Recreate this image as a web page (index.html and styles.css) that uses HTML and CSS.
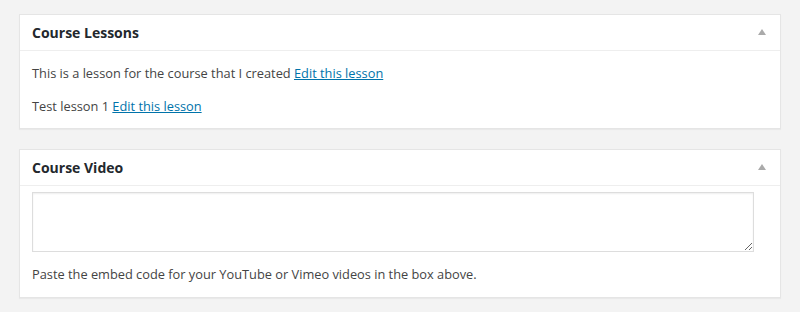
FILE: index.html
```html
<!DOCTYPE html>
<html lang="en">
<head>
    <meta charset="UTF-8">
    <title>Course Details</title>
    <link rel="stylesheet" href="styles.css">
</head>
<body>
    <div class="postbox">
        <div class="hndle">
            <h3>Course Lessons</h3>
            <span class="toggle"></span>
        </div>
        <div class="inside">
            <p>This is a lesson for the course that I created <a href="#">Edit this lesson</a></p>
            <p>Test lesson 1 <a href="#">Edit this lesson</a></p>
        </div>
    </div>

    <div class="postbox">
        <div class="hndle">
            <h3>Course Video</h3>
            <span class="toggle"></span>
        </div>
        <div class="inside inside-video">
            <textarea class="video-embed"></textarea>
            <p>Paste the embed code for your YouTube or Vimeo videos in the box above.</p>
        </div>
    </div>
</body>
</html>
```

FILE: styles.css
```css
body {
    font-family: 'Open Sans', sans-serif;
    background-color: #f3f3f3;
    color: #444;
    margin: 0;
    padding: 14px 19px 0 19px;
}
.postbox {
    width: 760px;
    background-color: #fff;
    border: 1px solid #e5e5e5;
    box-shadow: 0 1px 1px rgba(0, 0, 0, 0.04);
    margin-bottom: 20px;
}
.hndle {
    display: flex;
    align-items: center;
    justify-content: space-between;
    height: 19px;
    padding: 8px 12px;
    border-bottom: 1px solid #eee;
}
.hndle h3 {
    margin: 0;
    font-size: 14px;
    line-height: 19px;
    font-weight: 700;
    color: #23282d;
}
.toggle {
    width: 0;
    height: 0;
    border-left: 4px solid transparent;
    border-right: 4px solid transparent;
    border-bottom: 6px solid #aaa;
    margin-right: 2px;
    margin-top: -1px;
}
.inside {
    padding: 0 12px 12px;
    font-size: 12.8px;
}
.inside p {
    margin: 13px 0;
    line-height: 19.5px;
}
.inside p:last-child {
    margin-bottom: 0;
}
.inside a {
    color: #0073aa;
    text-decoration: underline;
}
.inside-video {
    padding-top: 6px;
}
.video-embed {
    display: block;
    box-sizing: border-box;
    width: 722px;
    height: 60px;
    margin: 0;
    border: 1px solid #ddd;
    box-shadow: inset 0 1px 2px rgba(0, 0, 0, 0.07);
    font-family: 'Open Sans', sans-serif;
}
```
